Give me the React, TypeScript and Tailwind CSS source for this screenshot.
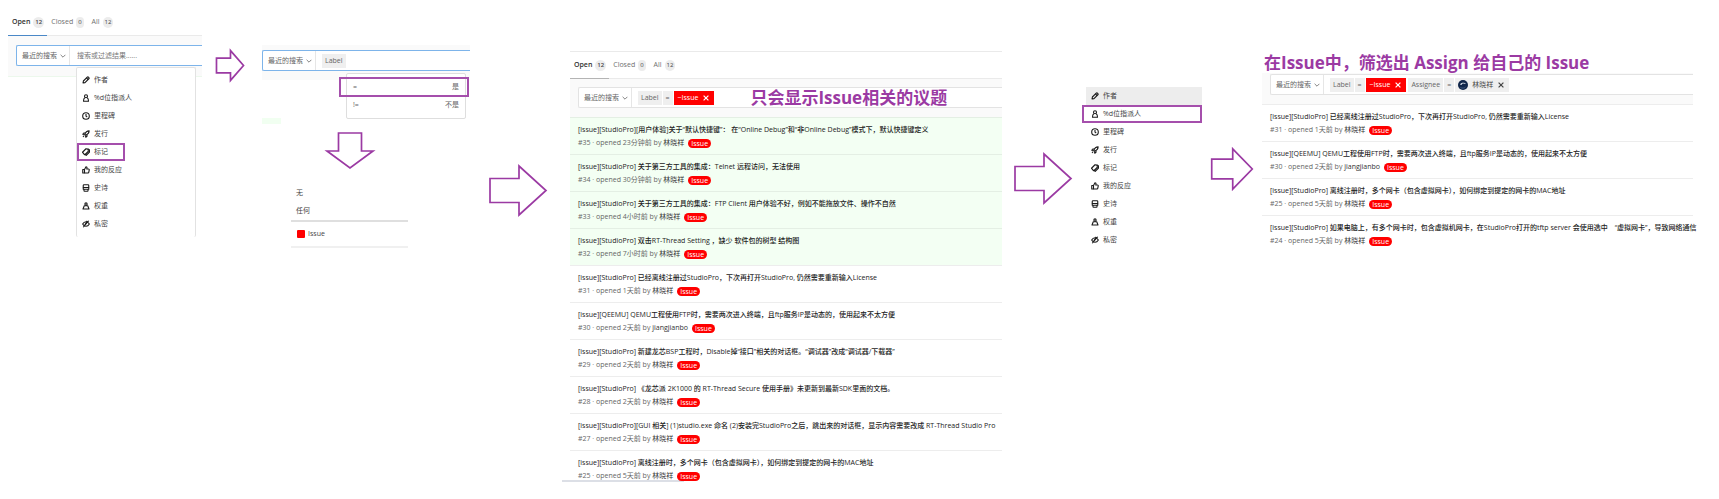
import type { ReactNode } from "react";

type IconName =
  | "pencil"
  | "user"
  | "clock"
  | "rocket"
  | "label"
  | "thumb"
  | "epic"
  | "weight"
  | "hidden";

const iconShapes: Record<IconName, ReactNode> = {
  pencil: (
    <>
      <path d="M2 14l.8-4L10.500 2.300a1.700 1.700 0 0 1 2.400 0l.8.8a1.700 1.700 0 0 1 0 2.400L6 13.200z" />
      <path d="M9 4l3 3" />
    </>
  ),
  user: (
    <>
      <circle cx="8" cy="4.500" r="3" />
      <path d="M5.500 7.500C3.800 8.500 3 10.500 3 14.500h10c0-4-.8-6-2.500-7" />
    </>
  ),
  clock: (
    <>
      <circle cx="8" cy="8" r="6.600" />
      <path d="M8 4v4.300l2.500 1.700" />
    </>
  ),
  rocket: (
    <>
      <path d="M5.500 8.500C7 4.500 10 1.800 14.300 1.700 14.200 6 11.500 9 7.500 10.500z" />
      <path d="M6.500 6H3.500L1.500 8.500l3.500.5M10 9.500v3L7.500 14.500 7 11M4.500 11L2 14" />
    </>
  ),
  label: (
    <>
      <path d="M1.500 8L8 1.500l4 .7.8 4.300L6.300 13a1 1 0 0 1-1.400 0L1.500 9.400a1 1 0 0 1 0-1.400z" />
      <path d="M12 2.200L14.800 3.500 15 8 8.500 14.800 6.300 13" />
    </>
  ),
  thumb: (
    <>
      <path d="M5 7l3-5.500c1.500 0 2.200 1 1.900 2.500L9.500 6H13a1.500 1.500 0 0 1 1.500 1.800l-1 5A1.500 1.500 0 0 1 12 14H5z" />
      <path d="M5 7H1.500v7H5" />
    </>
  ),
  epic: (
    <>
      <path d="M4 1.500h8a1.500 1.500 0 0 1 1.500 1.500V7h-11V3A1.500 1.500 0 0 1 4 1.500z" />
      <path d="M2.500 7v3.500h11V7M4 10.500V13.500a1 1 0 0 0 1 1h6a1 1 0 0 0 1-1V10.500" />
    </>
  ),
  weight: (
    <>
      <circle cx="8" cy="4" r="2.300" />
      <path d="M4.500 7.500h7L14 14H2z" />
    </>
  ),
  hidden: (
    <>
      <path d="M1.300 8C3 5 5.300 3.500 8 3.500S13 5 14.700 8C13 11 10.700 12.500 8 12.500S3 11 1.300 8z" />
      <path d="M13.500 1.500l-11 13M10.500 1.800L4.500 12" />
    </>
  ),
};

const menuItems: { icon: IconName; text: string }[] = [
  { icon: "pencil", text: "作者" },
  { icon: "user", text: "%d位指派人" },
  { icon: "clock", text: "里程碑" },
  { icon: "rocket", text: "发行" },
  { icon: "label", text: "标记" },
  { icon: "thumb", text: "我的反应" },
  { icon: "epic", text: "史诗" },
  { icon: "weight", text: "权重" },
  { icon: "hidden", text: "私密" },
];

interface Issue {
  id: number;
  title: string;
  age: string;
  author: string;
  fresh?: boolean;
}

const issues: Issue[] = [
  { id: 35, title: "[issue][StudioPro][用户体验]关于“默认快捷键”： 在“Online Debug”和“非Online Debug”模式下，默认快捷键定义", age: "23分钟前", author: "林晓祥", fresh: true },
  { id: 34, title: "[issue][StudioPro] 关于第三方工具的集成：Telnet 远程访问，无法使用", age: "30分钟前", author: "林晓祥", fresh: true },
  { id: 33, title: "[issue][StudioPro] 关于第三方工具的集成：FTP Client 用户体验不好，例如不能拖放文件、操作不自然", age: "4小时前", author: "林晓祥", fresh: true },
  { id: 32, title: "[issue][StudioPro] 双击RT-Thread Setting ，缺少 软件包的树型 结构图", age: "7小时前", author: "林晓祥", fresh: true },
  { id: 31, title: "[issue][StudioPro] 已经离线注册过StudioPro，下次再打开StudioPro, 仍然需要重新输入License", age: "1天前", author: "林晓祥" },
  { id: 30, title: "[issue][QEEMU] QEMU工程使用FTP时，需要两次进入终端，且ftp服务IP是动态的，使用起来不太方便", age: "2天前", author: "jiangjianbo" },
  { id: 29, title: "[issue][StudioPro] 新建龙芯BSP工程时，Disable掉“接口”相关的对话框。“调试器”改成“调试器/下载器”", age: "2天前", author: "林晓祥" },
  { id: 28, title: "[issue][StudioPro] 《龙芯派 2K1000 的 RT-Thread Secure 使用手册》未更新到最新SDK里面的文档。", age: "2天前", author: "林晓祥" },
  { id: 27, title: "[issue][StudioPro][GUI 相关] (1)studio.exe 命名 (2)安装完StudioPro之后，跳出来的对话框，显示内容需要改成 RT-Thread Studio Pro", age: "2天前", author: "林晓祥" },
  { id: 25, title: "[issue][StudioPro] 离线注册时，多个网卡（包含虚拟网卡），如何绑定到提定的网卡的MAC地址", age: "5天前", author: "林晓祥" },
];

const assignedIssues: Issue[] = [
  issues[4],
  issues[5],
  issues[9],
  { id: 24, title: "[issue][StudioPro] 如果电脑上，有多个网卡时，包含虚拟机网卡，在StudioPro打开的tftp server 会使用选中　“虚拟网卡”，导致网络通信", age: "5天前", author: "林晓祥" },
];

function Chevron() {
  return (
    <svg viewBox="0 0 10 10" className="size-[6px] shrink-0" fill="none" stroke="#777" strokeWidth="1.500">
      <path d="M1 3l4 4 4-4" />
    </svg>
  );
}

function Cross() {
  return (
    <svg viewBox="0 0 10 10" className="size-[6px] shrink-0" fill="none" stroke="currentColor" strokeWidth="2">
      <path d="M1 1l8 8M9 1L1 9" />
    </svg>
  );
}

function FlowArrow({ direction = "right", className }: { direction?: "right" | "down"; className: string }) {
  return (
    <svg
      viewBox={direction === "right" ? "0 0 58 51" : "0 0 48 37"}
      preserveAspectRatio="none"
      className={`shrink-0 overflow-visible ${className}`}
      fill="none"
      stroke="#9b3aa3"
      strokeWidth="1.700"
    >
      <path
        vectorEffect="non-scaling-stroke"
        d={
          direction === "right"
            ? "M1 13.500H30V1L57 25.500 30 50V37.500H1z"
            : "M12.500 1H35.500V19H47L24 36 1 19H12.500z"
        }
      />
    </svg>
  );
}

function Tabs({ accent }: { accent: "blue" | "gray" }) {
  const badge = "rounded-full bg-[#ececec] px-[2px] text-[6px] leading-[11px] text-[#444]";
  return (
    <nav className="flex h-[27px] gap-1 border-b border-[#eaeaea] text-[#707070]">
      <button
        className={`-mb-px flex items-center gap-[3px] border-b pr-[3px] pl-1 font-semibold text-[#303030] ${
          accent === "blue" ? "border-[#4a88c7]" : "border-[#b4b4b4]"
        }`}
      >
        Open <span className={badge}>12</span>
      </button>
      <button className="flex items-center gap-[3px]">
        Closed <span className={badge}>0</span>
      </button>
      <button className="ml-1 flex items-center gap-[3px]">
        All <span className={badge}>12</span>
      </button>
    </nav>
  );
}

function SearchBox({ focused = false, children }: { focused?: boolean; children: ReactNode }) {
  return (
    <div
      className={`relative flex h-[21px] items-stretch rounded-l-[2px] border border-r-0 bg-white ${
        focused ? "border-[#7db4ea]" : "border-[#e3e3e3]"
      }`}
    >
      <button className="flex w-[53px] shrink-0 items-center gap-[3px] border-r border-[#e6e6e6] pl-[5px] text-[#666]">
        最近的搜索
        <Chevron />
      </button>
      {children}
    </div>
  );
}

function Token({ children, tone = "gray" }: { children: ReactNode; tone?: "gray" | "dark" | "red" }) {
  return (
    <span
      className={`flex h-[14px] shrink-0 items-center ${
        tone === "red"
          ? "bg-[#ff0000] font-medium text-white"
          : tone === "dark"
            ? "bg-[#efefef] text-[#444]"
            : "bg-[#efefef] text-[#666]"
      }`}
    >
      {children}
    </span>
  );
}

function LabelFilter() {
  return (
    <div className="flex gap-px">
      <Token>
        <span className="px-[3px]">Label</span>
      </Token>
      <Token>
        <span className="px-[3px]">=</span>
      </Token>
      <Token tone="red">
        <span className="pl-1">~Issue</span>
        <button aria-label="移除标记" className="px-[5px]">
          <Cross />
        </button>
      </Token>
    </div>
  );
}

function Menu({ marked, active, className }: { marked: number; active?: number; className: string }) {
  return (
    <ul className={`text-[#444] ${className}`}>
      {menuItems.map((item, i) => (
        <li key={item.icon} className={`relative h-[18px] ${i === active ? "bg-[#ededed]" : ""}`}>
          <button className="flex h-full w-full items-center gap-1 pl-[5px] text-left">
            <svg
              viewBox="0 0 16 16"
              className="size-2 shrink-0"
              fill="none"
              stroke="#1a1a1a"
              strokeWidth="2.200"
              strokeLinejoin="round"
            >
              {iconShapes[item.icon]}
            </svg>
            {item.text}
          </button>
          {i === marked && (
            <span
              className={`pointer-events-none absolute inset-y-0 border-2 border-[#a54fac] ${
                active === undefined ? "left-0 w-12" : "-left-1 right-0"
              }`}
            />
          )}
        </li>
      ))}
    </ul>
  );
}

function IssueList({ items }: { items: Issue[] }) {
  return (
    <ul>
      {items.map((issue) => (
        <li
          key={issue.id}
          className={`flex h-[37px] flex-col gap-[3px] whitespace-nowrap border-t pl-2 pt-[6px] ${
            issue.fresh ? "border-[#e4efe4] bg-[#f3fff3]" : "border-[#ededed]"
          }`}
        >
          <a href={`#${issue.id}`} className="leading-[11px] font-medium text-[#222]">
            {issue.title}
          </a>
          <div className="flex items-center leading-[10px] text-[#666]">
            <span>
              #{issue.id} · opened {issue.age} by{" "}
              <a href={`#${issue.author}`} className="text-[#333]">
                {issue.author}
              </a>
            </span>
            <span className="ml-1 h-[9px] rounded-full bg-[#ff0000] px-[3px] leading-[9px] text-white">
              Issue
            </span>
          </div>
        </li>
      ))}
    </ul>
  );
}

export default function App() {
  return (
    <main className="grid min-h-screen grid-cols-[194fr_60fr_208fr_92fr_440fr_80fr_120fr_60fr_431fr] items-start overflow-hidden bg-white pr-[26px] pl-2 font-['Open_Sans','Noto_Sans_CJK_SC',sans-serif] text-[7px] leading-[10px]">
      <section className="min-w-0 pt-[9px]">
        <Tabs accent="blue" />
        <div className="border-b border-[#ecf8ec] bg-[#fafafa] pt-[9px] pb-[10px] pl-2">
          <SearchBox focused>
            <input
              aria-label="搜索或过滤结果"
              placeholder="搜索或过滤结果......"
              className="min-w-0 grow pl-[7px] outline-none placeholder:text-[#777]"
            />
            <div className="absolute top-[21px] right-[6px] left-[59px] rounded-[2px] border border-b-0 border-[#e2e2e2] bg-white pt-[3px] pb-1">
              <Menu marked={4} className="" />
            </div>
          </SearchBox>
        </div>
      </section>

      <div className="flex justify-center pt-[50px] pr-1">
        <FlowArrow className="h-[31px] w-[28px]" />
      </div>

      <section className="min-w-0 pt-[45px]">
        <div className="bg-[#fafafa] pt-[5px] pb-[9px]">
          <SearchBox focused>
            <div className="flex items-center pl-[6px]">
              <Token>
                <span className="px-[3px]">Label</span>
              </Token>
            </div>
            <div className="absolute top-[22px] right-1 left-[83px] rounded-[2px] border border-[#dedede] bg-white pt-[4px] pb-1 text-[#666]">
              <button className="relative flex h-[18px] w-full items-center justify-between px-[6px]">
                <span>=</span>
                <span>是</span>
                <span className="pointer-events-none absolute -inset-y-px -right-1 -left-2 border-2 border-[#a54fac]" />
              </button>
              <button className="flex h-[18px] w-full items-center justify-between px-[6px]">
                <span>!=</span>
                <span>不是</span>
              </button>
            </div>
          </SearchBox>
        </div>
        <div className="mt-[38px] h-[6px] w-[19px] bg-[#f1fff1]" />
        <div className="mt-2 flex pl-16">
          <FlowArrow direction="down" className="h-[37px] w-12" />
        </div>
        <div className="mt-[15px] mr-[62px] ml-[29px] text-[#444]">
          <button className="flex h-[18px] w-full items-center pl-[5px]">无</button>
          <button className="flex h-[18px] w-full items-center pl-[5px]">任何</button>
          <button className="flex h-[28px] w-full items-center gap-[3px] border-t-2 border-b-2 border-t-[#dfdfdf] border-b-[#f0f0f0] pl-[6px]">
            <span className="size-2 rounded-[1px] bg-[#ff0000]" />
            Issue
          </button>
        </div>
      </section>

      <div className="flex justify-end pt-[165px] pr-[15px]">
        <FlowArrow className="h-[51px] w-[58px]" />
      </div>

      <section className="min-w-0 pt-[51px]">
        <div className="ml-2">
          <div className="border-t border-[#eaeaea]">
            <Tabs accent="gray" />
          </div>
          <div className="bg-[#fafafa] pt-2 pb-[9px] pl-2">
            <SearchBox>
              <div className="flex grow items-center pl-[6px]">
                <LabelFilter />
                <h2 className="ml-9 text-[17px] leading-[19px] font-bold whitespace-nowrap text-[#9b3aa3]">
                  只会显示Issue相关的议题
                </h2>
              </div>
            </SearchBox>
          </div>
          <IssueList items={issues} />
        </div>
        <div className="-mt-[7px] h-[2px] w-[122px] bg-[#dcdfe6]" />
      </section>

      <div className="flex justify-center pt-[153px] pl-[2px]">
        <FlowArrow className="h-[51px] w-[58px]" />
      </div>

      <Menu marked={1} active={0} className="min-w-0 pt-[87px] pl-1" />

      <div className="flex justify-center pt-[148px]">
        <FlowArrow className="h-[42px] w-[42px]" />
      </div>

      <section className="min-w-0 pt-[52px]">
        <h2 className="ml-[2px] text-[17px] leading-[21px] font-bold whitespace-nowrap text-[#9b3aa3]">
          在Issue中，筛选出 Assign 给自己的 Issue
        </h2>
        <div className="bg-[#fafafa] pt-px pb-[9px] pl-2">
          <SearchBox>
            <div className="flex items-center gap-[2px] pl-[6px]">
              <LabelFilter />
              <div className="flex gap-px">
                <Token>
                  <span className="px-[3px]">Assignee</span>
                </Token>
                <Token>
                  <span className="px-[3px]">=</span>
                </Token>
                <Token tone="dark">
                  <svg viewBox="0 0 20 20" className="ml-[3px] size-[10px] shrink-0">
                    <circle cx="10" cy="10" r="10" fill="#10264a" />
                    <path d="M4 9c2-4 9-5 12-1l-3-.5c-3-.8-5 0-6 2.500z" fill="#e8edf5" />
                    <path d="M5 15c3 2 8 1.500 10-1" stroke="#51698f" strokeWidth="1.500" fill="none" />
                  </svg>
                  <span className="pl-1">林晓祥</span>
                  <button aria-label="移除指派人" className="px-[5px]">
                    <Cross />
                  </button>
                </Token>
              </div>
            </div>
          </SearchBox>
        </div>
        <IssueList items={assignedIssues} />
      </section>
    </main>
  );
}
